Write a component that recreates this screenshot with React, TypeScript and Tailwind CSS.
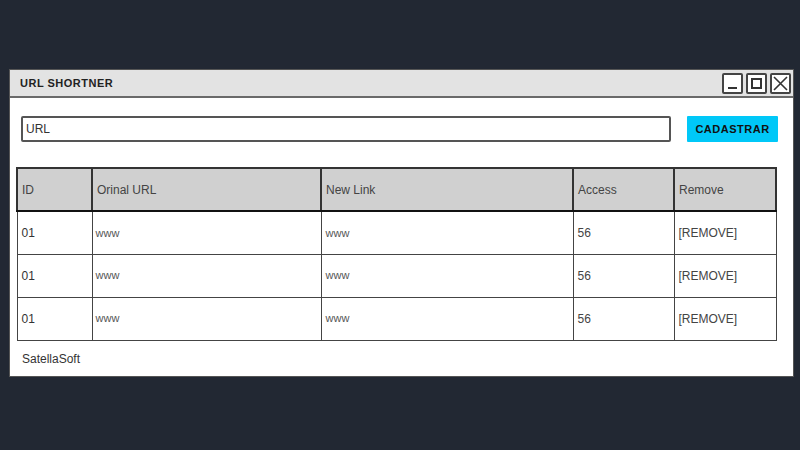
const rows = [
  { id: "01", url: "www", link: "www", access: "56" },
  { id: "01", url: "www", link: "www", access: "56" },
  { id: "01", url: "www", link: "www", access: "56" },
];

const cols = ["w-[75px]", "w-[229px]", "w-[252px]", "w-[101px]", "w-[102px]"];

export default function App() {
  return (
    <div className="h-[450px] w-[800px] bg-[#222833] pt-[69px] pl-[9px] font-['Liberation_Sans',sans-serif]">
      <div className="w-[785px] h-[308px] bg-white border border-[#555] flex flex-col">
        <div className="h-[28px] bg-[#e3e3e3] border-b-2 border-[#6a6a6a] flex items-center pl-[10px] pr-[2px]">
          <span className="text-[11px] font-bold tracking-[0.5px] text-[#222]">URL SHORTNER</span>
          <div className="ml-auto flex gap-[3px]">
            <div className="w-[21px] h-[21px] bg-white border-2 border-[#444] rounded-[2px] flex items-end justify-center pb-[3px]">
              <div className="w-[9px] h-[2px] bg-[#333]" />
            </div>
            <div className="w-[21px] h-[21px] bg-white border-2 border-[#444] rounded-[2px] flex items-center justify-center">
              <div className="w-[11px] h-[11px] border-2 border-[#333]" />
            </div>
            <div className="w-[21px] h-[21px] bg-white border-2 border-[#444] rounded-[2px] flex items-center justify-center">
              <svg width="15" height="15" viewBox="0 0 15 15" stroke="#333" strokeWidth="1.6" fill="none">
                <path d="M1 1 L14 14 M14 1 L1 14" />
              </svg>
            </div>
          </div>
        </div>

        <div className="flex items-center gap-[16px] pl-[11px] pt-[18px]">
          <div className="w-[650px] h-[26px] border-2 border-[#555] rounded-[2px] flex items-center pl-[3px]">
            <span className="text-[12px] text-[#333]">URL</span>
          </div>
          <button className="w-[91px] h-[26px] bg-[#00c8f8] text-[11px] font-bold tracking-[0.5px] text-[#111] rounded-[1px]">
            CADASTRAR
          </button>
        </div>

        <table className="self-start table-fixed w-[759px] ml-[6px] mt-[25px] border-collapse text-[12px] text-[#444]">
          <thead>
            <tr className="bg-[#d0d0d0] h-[43px]">
              {["ID", "Orinal URL", "New Link", "Access", "Remove"].map((h, i) => (
                <th
                  key={h}
                  className={`${cols[i]} border-2 border-[#333] border-b-[2px] border-b-[#111] text-left font-normal pl-[4px]`}
                >
                  {h}
                </th>
              ))}
            </tr>
          </thead>
          <tbody>
            {rows.map((r, idx) => (
              <tr key={idx} className="h-[43px]">
                <td className="border-[1.5px] border-[#444] pl-[4px] text-[#333]">{r.id}</td>
                <td className="border-[1.5px] border-[#444] pl-[3px] text-[11px] text-[#555]">{r.url}</td>
                <td className="border-[1.5px] border-[#444] pl-[4px] text-[11px] text-[#555]">{r.link}</td>
                <td className="border-[1.5px] border-[#444] pl-[4px]">{r.access}</td>
                <td className="border-[1.5px] border-[#444] pl-[4px]">[REMOVE]</td>
              </tr>
            ))}
          </tbody>
        </table>

        <div className="pl-[12px] pt-[9px] text-[12px] text-[#333]">SatellaSoft</div>
      </div>
    </div>
  );
}
